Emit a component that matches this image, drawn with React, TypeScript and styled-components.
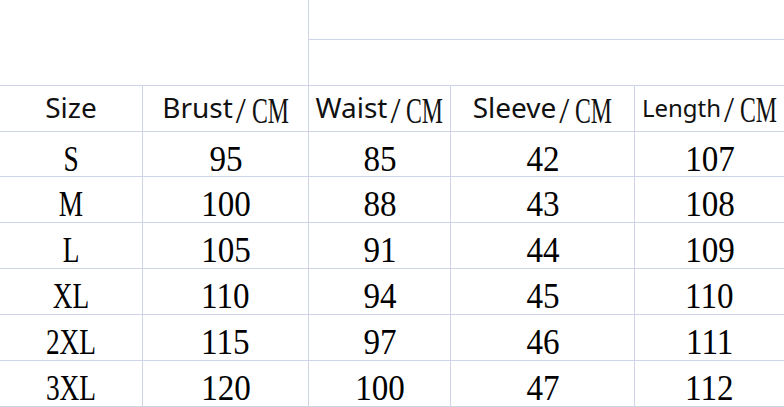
import React from 'react';
import styled, { createGlobalStyle } from 'styled-components';

const LINE = '#cfd3e8';

const GlobalStyle = createGlobalStyle`
  html, body {
    margin: 0;
    padding: 0;
    background: #fff;
  }
  body {
    width: 784px;
    height: 407px;
    overflow: hidden;
  }
`;

const Chart = styled.div`
  width: 784px;
  display: flex;
  flex-direction: column;
  color: #000;
`;

const Banner = styled.div`
  display: grid;
  grid-template-columns: 309px 1fr;
  height: 86px;
  flex: none;
  box-sizing: border-box;
  border-bottom: 1px solid ${LINE};
`;

const BannerBlank = styled.div`
  border-right: 1px solid ${LINE};
`;

const BannerSide = styled.div`
  display: grid;
  grid-template-rows: 40px 1fr;
`;

const BannerStrip = styled.div`
  border-bottom: 1px solid ${LINE};
`;

const Row = styled.div<{ $h: number }>`
  display: grid;
  grid-template-columns: 143px 166px 142px 184px 1fr;
  grid-template-rows: ${(p) => p.$h}px;
  height: ${(p) => p.$h}px;
  flex: none;
`;

const Cell = styled.div<{ $head?: boolean }>`
  box-sizing: border-box;
  min-height: 0;
  border-right: 1px solid ${LINE};
  border-bottom: 1px solid ${LINE};
  display: flex;
  justify-content: center;
  align-items: ${(p) => (p.$head ? 'flex-start' : 'center')};
  padding-top: ${(p) => (p.$head ? '1px' : '9px')};
  white-space: nowrap;

  &:last-child {
    border-right: none;
  }
`;

const HeadLine = styled.div`
  display: flex;
  align-items: baseline;
`;

const Label = styled.span<{ $size: number }>`
  font-family: 'Noto Sans', 'Open Sans', sans-serif;
  font-size: ${(p) => p.$size}px;
  line-height: 40px;
  color: #111;
`;

const Slash = styled.span`
  font-family: 'Liberation Serif', serif;
  font-size: 36px;
  line-height: 1;
  margin: 0 6px 0 3px;
  transform: translateY(5px);
  color: #111;
`;

const Cm = styled.span`
  width: 37px;
  font-family: 'Liberation Serif', serif;
  font-size: 36px;
  line-height: 1;
  transform: translateY(5px);
  color: #111;
`;

const Squash = styled.span`
  display: inline-block;
  transform: scaleX(0.66);
  transform-origin: left center;
`;

const Value = styled.span<{ $sx: number }>`
  display: inline-block;
  font-family: 'Liberation Serif', serif;
  font-size: 36px;
  line-height: 36px;
  transform: scaleX(${(p) => p.$sx});
`;

const headers = [
  { label: 'Size', size: 28, unit: false },
  { label: 'Brust', size: 28, unit: true },
  { label: 'Waist', size: 28, unit: true },
  { label: 'Sleeve', size: 28, unit: true },
  { label: 'Length', size: 24, unit: true },
];

const rows = [
  ['S', '95', '85', '42', '107'],
  ['M', '100', '88', '43', '108'],
  ['L', '105', '91', '44', '109'],
  ['XL', '110', '94', '45', '110'],
  ['2XL', '115', '97', '46', '111'],
  ['3XL', '120', '100', '47', '112'],
];

export default function App() {
  return (
    <>
      <GlobalStyle />
      <Chart>
        <Banner>
          <BannerBlank />
          <BannerSide>
            <BannerStrip />
            <div />
          </BannerSide>
        </Banner>

        <Row $h={46}>
          {headers.map((h) => (
            <Cell $head key={h.label}>
              <HeadLine>
                <Label $size={h.size}>{h.label}</Label>
                {h.unit && (
                  <>
                    <Slash>/</Slash>
                    <Cm>
                      <Squash>CM</Squash>
                    </Cm>
                  </>
                )}
              </HeadLine>
            </Cell>
          ))}
        </Row>

        {rows.map((r, i) => (
          <Row $h={i === 0 ? 45 : 46} key={r[0]}>
            {r.map((v, j) => (
              <Cell key={j}>
                <Value $sx={j === 0 ? 0.76 : 0.92}>{v}</Value>
              </Cell>
            ))}
          </Row>
        ))}
      </Chart>
    </>
  );
}
